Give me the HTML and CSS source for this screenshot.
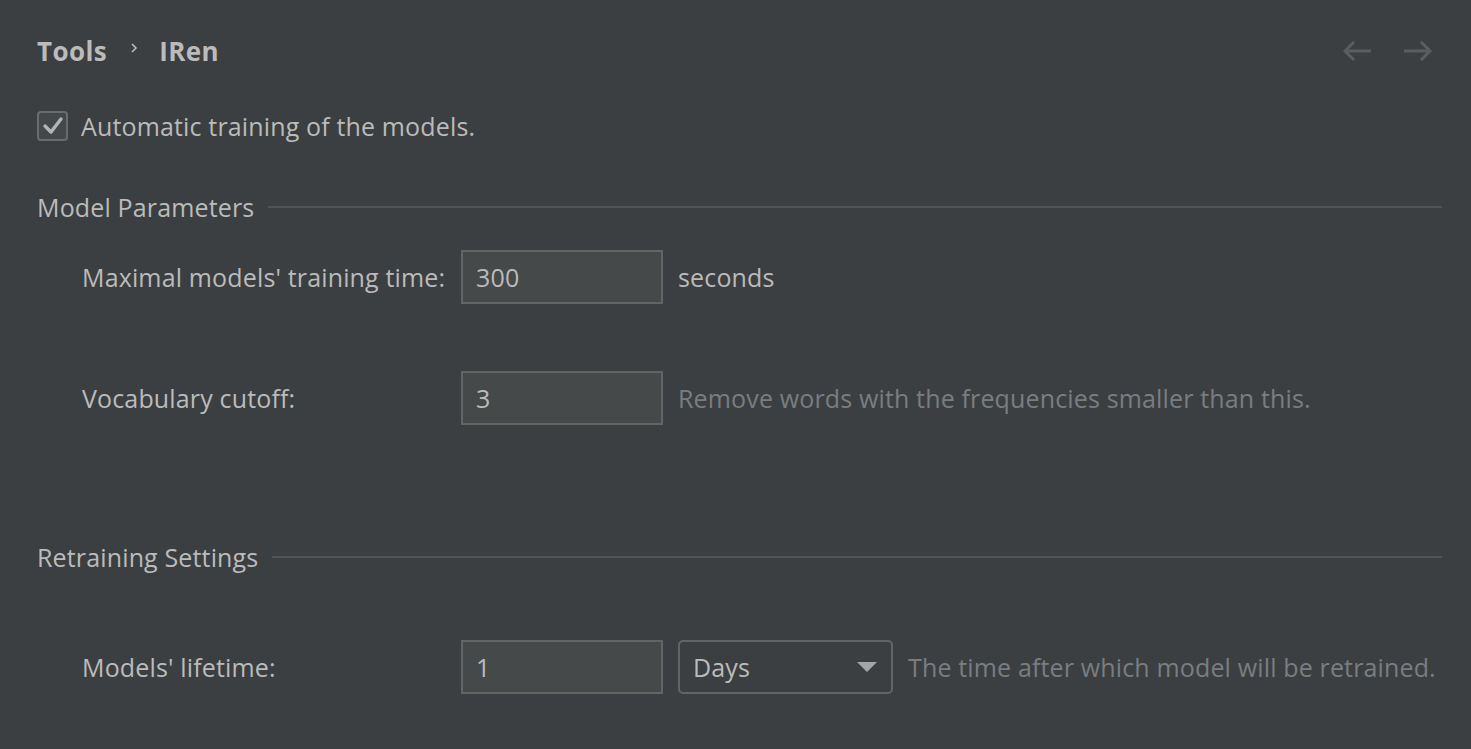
FILE: index.html
```html
<!DOCTYPE html>
<html>
<head>
<meta charset="utf-8">
<link rel="stylesheet" href="styles.css">
</head>
<body>
<div class="page">
  <header class="header">
    <nav class="crumbs">
      <span class="crumb">Tools</span>
      <svg class="chev" width="8" height="12" viewBox="0 0 8 12"><path d="M2 2 L6 6 L2 10" fill="none" stroke="#bbbbbb" stroke-width="1.6"/></svg>
      <span class="crumb">IRen</span>
    </nav>
    <div class="navs">
      <svg width="32" height="24" viewBox="0 0 32 24"><path d="M30 12 H4 M13 3 L4 12 L13 21" fill="none" stroke="#5b5e60" stroke-width="3"/></svg>
      <svg width="32" height="24" viewBox="0 0 32 24"><path d="M2 12 H28 M19 3 L28 12 L19 21" fill="none" stroke="#5b5e60" stroke-width="3"/></svg>
    </div>
  </header>

  <label class="check-row">
    <span class="checkbox"><svg width="22" height="20" viewBox="0 0 22 20"><path d="M3 10 L9 16 L19 3" fill="none" stroke="#b4b4b4" stroke-width="3.4" stroke-linecap="round" stroke-linejoin="round"/></svg></span>
    <span>Automatic training of the models.</span>
  </label>

  <section class="group g1">
    <div class="group-title"><span>Model Parameters</span><i class="rule"></i></div>
    <div class="row r1">
      <span class="label">Maximal models' training time:</span>
      <span class="field">300</span>
      <span class="after">seconds</span>
    </div>
    <div class="row r2">
      <span class="label">Vocabulary cutoff:</span>
      <span class="field">3</span>
      <span class="hint">Remove words with the frequencies smaller than this.</span>
    </div>
  </section>

  <section class="group g2">
    <div class="group-title"><span>Retraining Settings</span><i class="rule"></i></div>
    <div class="row r3">
      <span class="label">Models' lifetime:</span>
      <span class="field">1</span>
      <span class="combo">Days<svg width="20" height="12" viewBox="0 0 20 12"><path d="M0 1 H20 L10 11 Z" fill="#a5a5a5"/></svg></span>
      <span class="hint">The time after which model will be retrained.</span>
    </div>
  </section>
</div>
</body>
</html>
```
FILE: styles.css
```css
html, body {
  margin: 0;
  background: #3c3f41;
  height: 100%;
}
body {
  font-family: "Open Sans", "Noto Sans", sans-serif;
  font-size: 25px;
  letter-spacing: 0.15px;
  color: #bbbbbb;
}
.page {
  padding: 36px 29px 0 37px;
}
.header {
  display: flex;
  align-items: center;
  justify-content: space-between;
  height: 30px;
}
.crumbs {
  display: flex;
  align-items: center;
}
.crumb {
  font-weight: 700;
  font-size: 26px;
  letter-spacing: 0.4px;
  line-height: 30px;
}
.chev {
  margin: 0 21px 0 23px;
  position: relative;
  top: -3px;
}
.navs {
  display: flex;
  gap: 29px;
  margin-right: 8px;
}
.check-row {
  display: flex;
  align-items: center;
  margin-top: 45px;
  height: 30px;
}
.checkbox {
  box-sizing: border-box;
  width: 31px;
  height: 30px;
  border: 2px solid #6b6b6b;
  border-radius: 4px;
  background: #43494a;
  display: flex;
  align-items: center;
  justify-content: center;
  margin-right: 13px;
}
.group-title {
  display: flex;
  align-items: center;
  height: 30px;
}
.g1 { margin-top: 51px; }
.g2 { margin-top: 117px; }
.rule {
  flex: 1;
  height: 2px;
  background: #515456;
  margin-left: 14px;
}
.row {
  display: flex;
  align-items: center;
  padding-left: 45px;
}
.r1 { margin-top: 28px; }
.r2 { margin-top: 67px; }
.r3 { margin-top: 68px; }
.label {
  width: 379px;
  flex: none;
}
.field {
  box-sizing: border-box;
  width: 202px;
  height: 54px;
  border: 2px solid #646464;
  background: #45494a;
  display: flex;
  align-items: center;
  padding-left: 13px;
  flex: none;
}
.after {
  margin-left: 15px;
}
.hint {
  margin-left: 15px;
  color: #7a7d80;
  white-space: nowrap;
}
.combo {
  box-sizing: border-box;
  margin-left: 15px;
  width: 215px;
  height: 54px;
  flex: none;
  border: 2px solid #646464;
  border-radius: 5px;
  display: flex;
  align-items: center;
  justify-content: space-between;
  padding: 0 14px 0 13px;
}
```
